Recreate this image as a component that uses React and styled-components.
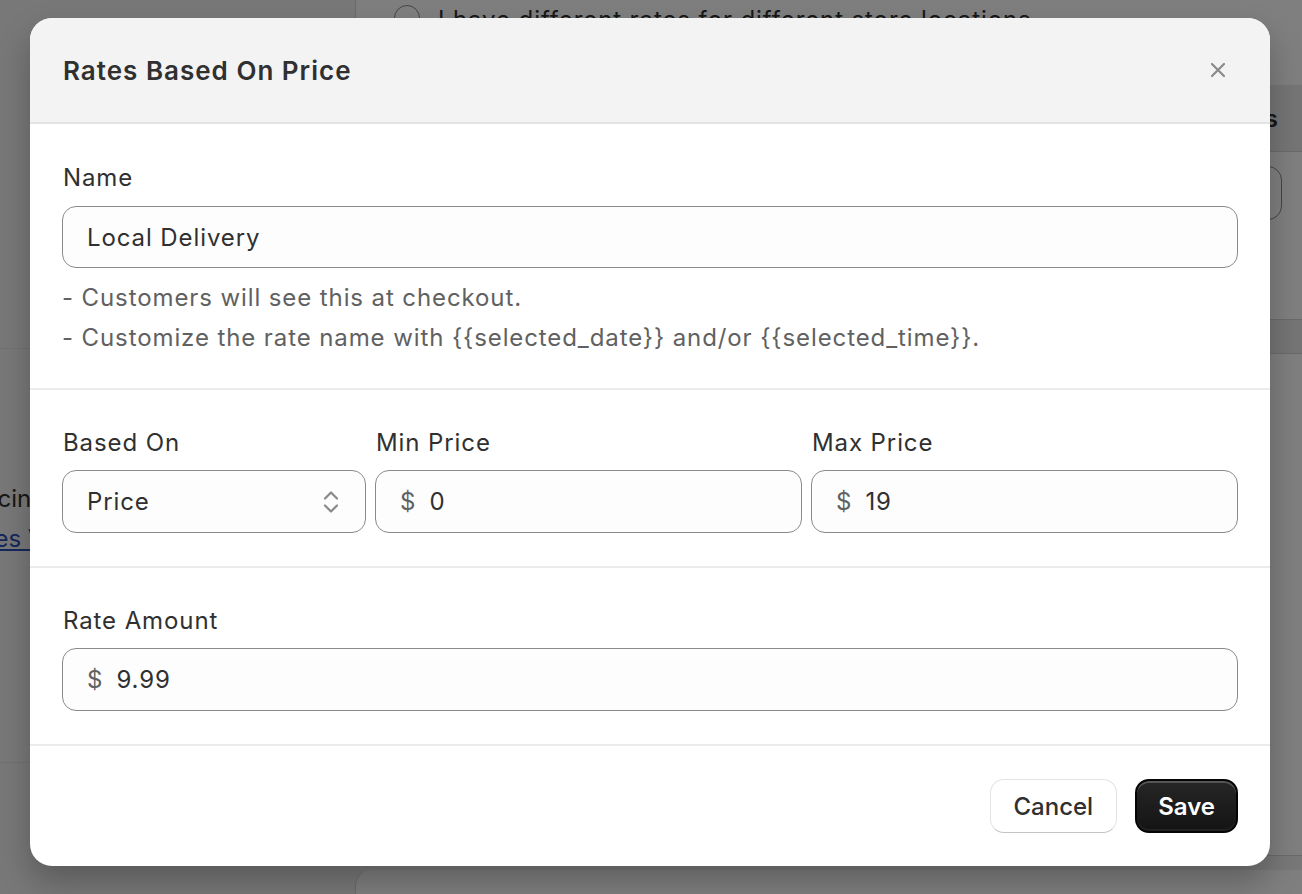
import React from "react";
import styled, { createGlobalStyle } from "styled-components";

const GlobalStyle = createGlobalStyle`
  * { box-sizing: border-box; }
  body {
    margin: 0;
    font-family: Inter, "Noto Sans", "Liberation Sans", sans-serif;
    color: #303030;
    -webkit-font-smoothing: antialiased;
  }
`;

/* ---------- page behind the modal ---------- */

const Page = styled.div`
  position: relative;
  width: 1302px;
  height: 894px;
  overflow: hidden;
  background: #f1f1f1;
  display: grid;
  grid-template-columns: 355px 1fr;
`;

const Aside = styled.div`
  display: flex;
  flex-direction: column;
  padding-top: 348px;
  font-size: 24px;
`;

const AsideBlock = styled.div`
  border-top: 1px solid #e3e3e3;
  border-bottom: 1px solid #e3e3e3;
  height: 415px;
  padding-top: 130px;
  margin-left: -33px;
  line-height: 40px;
`;

const AsideLink = styled.a`
  display: block;
  margin-left: -9px;
  color: #2c4fb8;
  text-decoration: underline;
`;

const Main = styled.div`
  display: flex;
  flex-direction: column;
  gap: 14px;
`;

const Card = styled.div`
  background: #fff;
  border-left: 1px solid #d4d4d4;
  border-radius: ${(p) => (p.$top ? "16px 0 0 0" : "0")};
  height: ${(p) => p.$h}px;
  display: flex;
  flex-direction: column;
`;

const RadioRow = styled.div`
  height: 85px;
  display: flex;
  align-items: flex-start;
  gap: 18px;
  padding: 5px 0 0 38px;
  font-size: 24px;
  letter-spacing: 0.9px;
`;

const Radio = styled.span`
  width: 26px;
  height: 26px;
  border-radius: 50%;
  border: 1.5px solid #8a8a8a;
  flex-shrink: 0;
`;

const TableHead = styled.div`
  height: 67px;
  background: #ebebeb;
  border-bottom: 1px solid #d4d4d4;
  display: flex;
  align-items: center;
  justify-content: flex-end;
  padding-right: 24px;
  font-size: 24px;
  font-weight: 600;
`;

const TableRow = styled.div`
  height: 168px;
  padding: 14px 20px 0 0;
  display: flex;
  justify-content: flex-end;
  border-bottom: 1px solid #d4d4d4;
`;

const BgInput = styled.div`
  width: 300px;
  height: 54px;
  border: 1.5px solid #8a8a8a;
  border-radius: 14px;
`;

const Band = styled.div`
  height: 34px;
  background: #ebebeb;
  border-bottom: 1px solid #d4d4d4;
`;

const Spacer = styled.div`
  flex: 1;
  border-bottom: 1px solid #d4d4d4;
`;

/* ---------- modal ---------- */

const Overlay = styled.div`
  position: absolute;
  inset: 0;
  background: rgba(0, 0, 0, 0.5);
  display: flex;
  justify-content: flex-start;
  align-items: flex-start;
  padding: 18px 0 0 30px;
`;

const Modal = styled.div`
  width: 1240px;
  background: #fff;
  border-radius: 22px;
  overflow: hidden;
  box-shadow: 0 16px 32px rgba(0, 0, 0, 0.25);
`;

const Header = styled.div`
  height: 106px;
  background: #f3f3f3;
  border-bottom: 2px solid #e3e3e3;
  display: flex;
  align-items: center;
  justify-content: space-between;
  padding: 0 36px 0 33px;
`;

const Title = styled.h2`
  margin: 0;
  font-size: 26px;
  font-weight: 600;
  letter-spacing: 1px;
  color: #303030;
`;

const CloseButton = styled.button`
  width: 32px;
  height: 32px;
  border: 0;
  padding: 0;
  background: transparent;
  display: flex;
  align-items: center;
  justify-content: center;
  cursor: pointer;
`;

const Section = styled.div`
  padding: ${(p) => p.$pad || "37px 32px 33px 32px"};
  border-bottom: 2px solid #ebebeb;
`;

const Row = styled.div`
  display: grid;
  grid-template-columns: 304px minmax(0, 1fr) minmax(0, 1fr);
  gap: 9px;
`;

const Field = styled.div`
  display: flex;
  flex-direction: column;
  min-width: 0;
  gap: ${(p) => p.$gap || 11}px;
`;

const Label = styled.label`
  font-size: 24px;
  line-height: 32px;
  letter-spacing: 0.9px;
  color: #303030;
  padding-left: 1px;
`;

const InputBox = styled.div`
  height: ${(p) => p.$h || 63}px;
  border: 1px solid #8a8a8a;
  border-radius: 14px;
  background: #fdfdfd;
  display: flex;
  align-items: center;
  padding: 0 24px;
  gap: 14px;
`;

const Prefix = styled.span`
  font-size: 24px;
  color: #616161;
`;

const Input = styled.input`
  flex: 1;
  min-width: 0;
  width: 100%;
  border: 0;
  outline: none;
  background: transparent;
  font: inherit;
  font-size: 24px;
  letter-spacing: 0.9px;
  color: #303030;
  padding: 0;
`;

const SelectBox = styled(InputBox)`
  justify-content: space-between;
  padding-right: 26px;
`;

const SelectValue = styled.span`
  font-size: 24px;
  letter-spacing: 0.9px;
  color: #303030;
`;

const Help = styled.div`
  margin-top: 10px;
  font-size: 24px;
  line-height: 40px;
  letter-spacing: 0.9px;
  color: #616161;
`;

const Footer = styled.div`
  display: flex;
  justify-content: flex-end;
  gap: 18px;
  padding: 33px 32px;
`;

const Button = styled.button`
  height: 54px;
  padding: 0 ${(p) => (p.$primary ? 21 : 23)}px;
  border-radius: 14px;
  font-family: inherit;
  font-size: 24px;
  font-weight: ${(p) => (p.$primary ? 600 : 500)};
  cursor: pointer;
  color: ${(p) => (p.$primary ? "#fff" : "#303030")};
  background: ${(p) =>
    p.$primary ? "linear-gradient(#262626, #141414)" : "#fff"};
  border: ${(p) => (p.$primary ? "2px solid #050505" : "1.5px solid #e3e3e3")};
  border-bottom-color: ${(p) => (p.$primary ? "#050505" : "#c4c4c4")};
  box-shadow: ${(p) =>
    p.$primary
      ? "inset 0 2px 0 rgba(255,255,255,0.22), inset 0 -2px 0 rgba(255,255,255,0.06)"
      : "none"};
`;

const CloseIcon = () => (
  <svg width="16" height="16" viewBox="0 0 16 16" fill="none">
    <path
      d="M2 2 L14 14 M14 2 L2 14"
      stroke="#8a8a8a"
      strokeWidth="2.2"
      strokeLinecap="round"
    />
  </svg>
);

const SelectIcon = () => (
  <svg width="16" height="28" viewBox="0 0 16 28" fill="none">
    <path
      d="M2 10.5 L8 4.5 L14 10.5 M2 17.5 L8 23.5 L14 17.5"
      stroke="#8a8a8a"
      strokeWidth="2.2"
      strokeLinecap="round"
      strokeLinejoin="round"
    />
  </svg>
);

const PriceField = ({ label, value }) => (
  <Field>
    <Label>{label}</Label>
    <InputBox>
      <Prefix>$</Prefix>
      <Input defaultValue={value} readOnly />
    </InputBox>
  </Field>
);

export default function App() {
  return (
    <>
      <GlobalStyle />
      <Page>
        <Aside>
          <AsideBlock>
            <div>Pricing</div>
            <AsideLink>Rates Via Zones</AsideLink>
          </AsideBlock>
        </Aside>
        <Main>
          <Card $h={856}>
            <RadioRow>
              <Radio />
              <span>I have different rates for different store locations</span>
            </RadioRow>
            <TableHead>Rates</TableHead>
            <TableRow>
              <BgInput />
            </TableRow>
            <Band />
            <Spacer />
          </Card>
          <Card $top $h={60} />
        </Main>

        <Overlay>
          <Modal>
            <Header>
              <Title>Rates Based On Price</Title>
              <CloseButton aria-label="Close">
                <CloseIcon />
              </CloseButton>
            </Header>

            <Section $pad="38px 32px 30px 32px">
              <Field $gap={12}>
                <Label>Name</Label>
                <InputBox $h={62}>
                  <Input defaultValue="Local Delivery" readOnly />
                </InputBox>
              </Field>
              <Help>
                <div>- Customers will see this at checkout.</div>
                <div>
                  - Customize the rate name with {"{{selected_date}}"} and/or{" "}
                  {"{{selected_time}}"}.
                </div>
              </Help>
            </Section>

            <Section>
              <Row>
                <Field>
                  <Label>Based On</Label>
                  <SelectBox>
                    <SelectValue>Price</SelectValue>
                    <SelectIcon />
                  </SelectBox>
                </Field>
                <PriceField label="Min Price" value="0" />
                <PriceField label="Max Price" value="19" />
              </Row>
            </Section>

            <Section>
              <PriceField label="Rate Amount" value="9.99" />
            </Section>

            <Footer>
              <Button>Cancel</Button>
              <Button $primary>Save</Button>
            </Footer>
          </Modal>
        </Overlay>
      </Page>
    </>
  );
}
